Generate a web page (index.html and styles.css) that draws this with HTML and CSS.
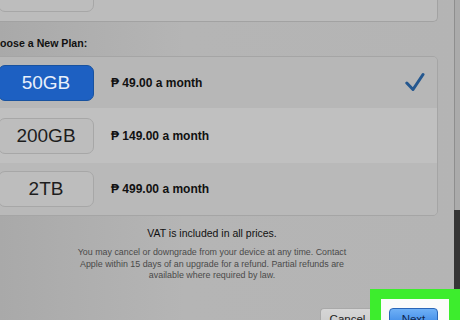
FILE: index.html
```html
<!DOCTYPE html>
<html>
<head>
<meta charset="utf-8">
<link rel="stylesheet" href="styles.css">
</head>
<body>
<div class="main">
  <div class="top-card">
    <span class="size-btn">50GB</span>
  </div>
  <div class="title">Choose a New Plan:</div>
  <div class="plans">
    <div class="plan plan-a">
      <span class="size-btn selected">50GB</span>
      <span class="price">₱ 49.00 a month</span>
      <svg class="check" width="20" height="20" viewBox="0 0 20 20"><path d="M1.8 11 L8 17.5 L18 2.5" fill="none" stroke="#24578f" stroke-width="3" stroke-linejoin="round" stroke-linecap="round"/></svg>
    </div>
    <div class="plan plan-b">
      <span class="size-btn">200GB</span>
      <span class="price">₱ 149.00 a month</span>
    </div>
    <div class="plan plan-c">
      <span class="size-btn">2TB</span>
      <span class="price">₱ 499.00 a month</span>
    </div>
  </div>
  <p class="vat">VAT is included in all prices.</p>
  <p class="note">You may cancel or downgrade from your device at any time. Contact<br>Apple within 15 days of an upgrade for a refund. Partial refunds are<br>available where required by law.</p>
  <div class="footer">
    <span class="btn cancel">Cancel</span>
    <span class="highlight"><span class="btn next">Next</span></span>
  </div>
</div>
</body>
</html>
```
FILE: styles.css
```css
html, body {
  margin: 0;
  padding: 0;
}
body {
  width: 460px;
  height: 320px;
  overflow: hidden;
  font-family: "Liberation Sans", Arial, "DejaVu Sans", sans-serif;
  background:
    linear-gradient(#8e8e8e, #8e8e8e) 454px 0 / 1px 210px no-repeat,
    linear-gradient(#ababab, #ababab) 455px 0 / 5px 210px no-repeat,
    linear-gradient(#353535, #353535) 454px 210px / 6px 110px no-repeat,
    linear-gradient(90deg, #a9a9a9 0%, #b5b5b5 40%, #b4b4b4 100%);
}
.main {
  margin-left: -14px;
  padding-right: 22px;
  display: flex;
  flex-direction: column;
}
.top-card {
  margin-top: -29px;
  padding: 5px 0 9px 11px;
  background: #bcbcbc;
  border: 1px solid #a2a2a2;
  border-top: none;
  border-radius: 0 0 5px 5px;
  display: flex;
}
.size-btn {
  box-sizing: border-box;
  width: 96px;
  height: 36px;
  border-radius: 7px;
  background: #bdbdbd;
  border: 1px solid #a7a7a7;
  color: #1d1d1d;
  font-size: 19px;
  display: flex;
  align-items: center;
  justify-content: center;
  flex: none;
}
.size-btn.selected {
  background: #1d60c2;
  border-color: #18529f;
  color: #e9f0fb;
}
.title {
  padding: 15px 0 6px;
  font-size: 10.6px;
  line-height: 13px;
  font-weight: bold;
  color: #111;
}
.plans {
  border: 1px solid #a5a5a5;
  border-radius: 5px;
  overflow: hidden;
  display: flex;
  flex-direction: column;
}
.plan {
  display: flex;
  align-items: center;
  padding: 0 12px 0 11px;
}
.plan-a { height: 51px; background: #b7b7b7; }
.plan-b { height: 55px; background: #c0c0c0; }
.plan-c { height: 52px; background: #b9b9b9; }
.price {
  margin-left: 17px;
  font-size: 12px;
  font-weight: bold;
  color: #111;
  flex: 1;
}
.check {
  flex: none;
  margin-top: -1px;
}
.vat {
  margin: 10px 0 0;
  text-align: center;
  font-size: 10.5px;
  line-height: 14px;
  color: #111;
}
.note {
  margin: 7px 0 0;
  text-align: center;
  font-size: 8.9px;
  line-height: 11.5px;
  color: #4a4a4a;
}
.footer {
  margin-top: 7px;
  margin-right: -22px;
  display: flex;
  justify-content: flex-end;
  align-items: flex-end;
}
.btn {
  box-sizing: border-box;
  height: 22px;
  font-size: 11.5px;
  display: flex;
  align-items: center;
  justify-content: center;
  border-radius: 4px;
}
.cancel {
  width: 50px;
  padding-left: 4px;
  background: linear-gradient(#d6d6d6, #c9c9c9);
  border: 1px solid #a9a9a9;
  border-right: none;
  border-radius: 4px 0 0 4px;
  color: #1a1a1a;
}
.highlight {
  display: flex;
  background: #fbfbfb;
  border-style: solid;
  border-color: #3ded2d;
  border-width: 10px 11px 0 11px;
  padding: 9px 11px 0 8px;
}
.next {
  width: 49px;
  background: linear-gradient(#6fb0f6, #2f7fe2);
  border: 1px solid #2a66b8;
  color: #10254a;
}
```
